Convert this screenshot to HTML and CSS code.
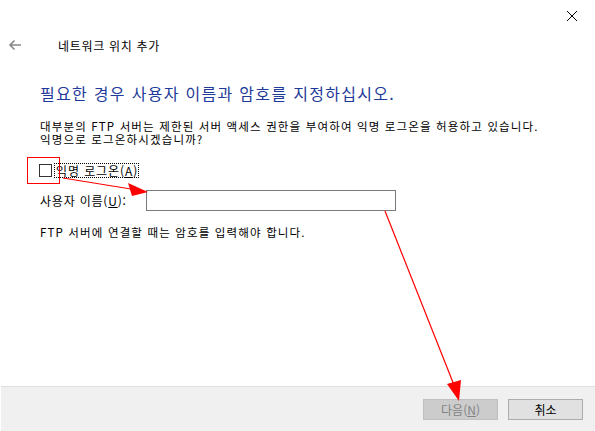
FILE: index.html
```html
<!DOCTYPE html>
<html lang="ko">
<head>
  <meta charset="UTF-8">
  <title>네트워크 위치 추가</title>
  <link rel="stylesheet" href="styles.css">
</head>
<body>
  <div class="window">
    <div class="titlebar">
      <span class="close">
        <svg width="12" height="12" viewBox="0 0 12 12"><path d="M1 1L11 11M11 1L1 11" stroke="#000" stroke-width="1"/></svg>
      </span>
    </div>
    <div class="nav">
      <span class="back">
        <svg width="14" height="12" viewBox="0 0 14 12"><path d="M13 6H2M6.5 1.5L2 6l4.5 4.5" stroke="#888" stroke-width="1.6" fill="none"/></svg>
      </span>
      <span class="nav-title">네트워크 위치 추가</span>
    </div>

    <div class="content">
      <h1 class="instruction">필요한 경우 사용자 이름과 암호를 지정하십시오.</h1>
      <p class="desc">
        <span class="line">대부분의 FTP 서버는 제한된 서버 액세스 권한을 부여하여 익명 로그온을 허용하고 있습니다.</span>
        <span class="line">익명으로 로그온하시겠습니까?</span>
      </p>

      <div class="check-row">
        <span class="checkbox"></span>
        <span class="check-label">익명 로그온(<u>A</u>)</span>
      </div>

      <div class="user-row">
        <span class="user-label">사용자 이름(<u>U</u>):</span>
        <span class="textbox"></span>
      </div>

      <p class="desc note">FTP 서버에 연결할 때는 암호를 입력해야 합니다.</p>
    </div>

    <div class="footer">
      <button class="btn" disabled>다음(<u>N</u>)</button>
      <button class="btn">취소</button>
    </div>

    <svg class="annot" width="595" height="431" viewBox="0 0 595 431">
      <rect x="27.5" y="157.5" width="32" height="26" fill="none" stroke="#f00" stroke-width="1"/>
      <line x1="63" y1="178" x2="134" y2="189.5" stroke="#f00" stroke-width="1.2"/>
      <polygon points="148,192 128,183 132,196" fill="#f00"/>
      <line x1="385" y1="211" x2="454" y2="385" stroke="#f00" stroke-width="1.2"/>
      <polygon points="459,401 447,384 461,380" fill="#f00"/>
    </svg>
  </div>
</body>
</html>
```

FILE: styles.css
```css
* { box-sizing: border-box; }
html, body { margin: 0; padding: 0; background: #fff; }
body { font-family: "Noto Sans CJK KR", "Noto Sans", sans-serif; color: #000; }

.window {
  width: 595px; height: 431px;
  position: relative;
  display: flex; flex-direction: column;
  overflow: hidden;
}

.titlebar { height: 31px; display: flex; justify-content: flex-end; }
.close {
  width: 46px; height: 31px;
  display: flex; align-items: center; justify-content: center;
  padding-top: 1px;
}

.nav { height: 28px; display: flex; align-items: center; padding-left: 8px; }
.back { width: 50px; display: flex; align-items: center; }
.nav-title { font-size: 12px; letter-spacing: 0.7px; }

.content { flex: 1; padding: 22px 0 0 40px; }

.instruction {
  margin: 0 0 15px;
  font-size: 16px; font-weight: normal;
  color: #1e3a9a;
  line-height: 24px;
  letter-spacing: 1.3px;
}

.desc { margin: 0; font-size: 11.5px; line-height: 13px; letter-spacing: 1.15px; }
.desc .line { display: block; height: 13px; }

.check-row {
  display: flex; align-items: center;
  margin: 17px 0 0 -1px;
  height: 15px;
}
.checkbox {
  width: 13px; height: 13px;
  border: 1px solid #333; background: #fff;
}
.check-label {
  margin-left: 2px;
  font-size: 12px; line-height: 13px;
  letter-spacing: 0.9px;
  border: 1px dotted #000;
  padding: 0 0 0 1px;
}

.user-row { display: flex; align-items: center; margin-top: 12px; height: 21px; }
.user-label { font-size: 12px; width: 106px; letter-spacing: 0.8px; }
.textbox {
  width: 250px; height: 21px;
  border: 1px solid #7a7a7a; background: #fff;
}

.note { margin-top: 15px; }

.footer {
  height: 45px;
  margin-left: 1px;
  background: #f0f0f0;
  border-top: 1px solid #dfdfdf;
  display: flex; justify-content: flex-end; align-items: center; gap: 10px;
  padding: 0 12px 0 0;
}
.btn {
  width: 75px; height: 21px;
  font-family: inherit; font-size: 12px;
  background: #e1e1e1; border: 1px solid #adadad;
  color: #000; padding: 0;
}
.btn:disabled { background: #cccccc; border-color: #bfbfbf; color: #838383; }

.annot { position: absolute; left: 0; top: 0; pointer-events: none; }
```
